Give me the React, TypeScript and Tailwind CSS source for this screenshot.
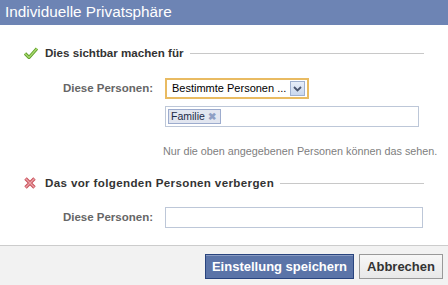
import React from 'react'

const font = { fontFamily: '"Liberation Sans", Arial, sans-serif' }

function CheckIcon() {
  return (
    <svg width="14" height="12" viewBox="0 0 14 12" className="block">
      <path d="M1 6.5 L5 10.5 L13 1.5" fill="none" stroke="#5e9e2a" strokeWidth="3.2" strokeLinejoin="miter" />
      <path d="M1 6.5 L5 10.5 L13 1.5" fill="none" stroke="#a8d86e" strokeWidth="1.4" strokeLinejoin="miter" />
    </svg>
  )
}

function CrossIcon() {
  return (
    <svg width="12" height="12" viewBox="0 0 12 12" className="block">
      <path d="M1.5 1.5 L10.5 10.5 M10.5 1.5 L1.5 10.5" fill="none" stroke="#c9505a" strokeWidth="3.4" />
      <path d="M1.5 1.5 L10.5 10.5 M10.5 1.5 L1.5 10.5" fill="none" stroke="#eba3a8" strokeWidth="1.4" />
    </svg>
  )
}

function SectionHeading({ icon, title, wide }: { icon: React.ReactNode; title: string; wide?: boolean }) {
  return (
    <div className="flex h-4 items-center pl-[24px] pr-[24px]">
      <div className="flex w-[21px] shrink-0 items-center">{icon}</div>
      <span
        className={
          'shrink-0 whitespace-nowrap text-[11.6px] font-bold text-[#333] ' + (wide ? 'tracking-[0.35px]' : '')
        }
      >
        {title}
      </span>
      <div className="ml-[6px] h-px min-w-0 flex-1 bg-[#c8c8c8]" />
    </div>
  )
}

function Label({ children }: { children: React.ReactNode }) {
  return (
    <div className="w-[153px] shrink-0 whitespace-nowrap text-right text-[11.5px] font-bold text-[#666]">{children}</div>
  )
}

export default function App() {
  return (
    <div className="flex h-[285px] w-[448px] flex-col overflow-hidden bg-white" style={font}>
      <div className="flex h-[25px] shrink-0 items-center bg-[#6d84b4] pl-[5px]">
        <span className="text-[15.3px] text-white">Individuelle Privatsphäre</span>
      </div>

      <div className="mt-[20px]">
        <SectionHeading icon={<CheckIcon />} title="Dies sichtbar machen für" />
      </div>

      <div className="mt-[17px] flex items-center gap-[12px]">
        <Label>Diese Personen:</Label>
        <div className="flex h-[21px] w-[144px] items-center justify-between border-2 border-[#e9bb62] bg-white pl-[5px] pr-[2px]">
          <span className="whitespace-nowrap text-[11px] text-black">Bestimmte Personen ...</span>
          <div className="flex h-[15px] w-[15px] items-center justify-center border border-[#9fb0d0] bg-gradient-to-b from-[#e8eef9] to-[#c9d7ee]">
            <svg width="9" height="6" viewBox="0 0 9 6">
              <path d="M1 1 L4.5 4.5 L8 1" fill="none" stroke="#4a5670" strokeWidth="1.8" />
            </svg>
          </div>
        </div>
      </div>

      <div className="ml-[165px] mt-[7px] flex h-[21px] w-[254px] items-center border border-[#bdc7d8] pl-[2px]">
        <div className="flex h-[15px] items-center gap-[3px] border border-[#9dacce] bg-[#e2e6f0] pl-[2px] pr-[4px]">
          <span className="text-[10.5px] leading-none text-[#1c2a47]">Familie</span>
          <span className="text-[10px] font-bold leading-none text-[#8f9fc4]">✖</span>
        </div>
      </div>

      <div className="ml-[163px] mt-[17px] whitespace-nowrap text-[10.8px] leading-[14px] text-[#808080]">
        Nur die oben angegebenen Personen können das sehen.
      </div>

      <div className="mt-[17px]">
        <SectionHeading icon={<CrossIcon />} title="Das vor folgenden Personen verbergen" wide />
      </div>

      <div className="mt-[16px] flex items-center gap-[12px]">
        <Label>Diese Personen:</Label>
        <div className="h-[21px] w-[258px] border border-[#bdc7d8] bg-white" />
      </div>

      <div className="mt-[17px] flex flex-1 items-start justify-end gap-[5px] border-t border-[#ccc] bg-[#f2f2f2] pr-[5px] pt-[8px]">
        <button className="h-[25px] w-[149px] border border-[#29447e] bg-[#5b74a8] text-[13px] font-bold text-white shadow-[inset_0_1px_0_#8a9cc2]">
          Einstellung speichern
        </button>
        <button className="h-[25px] w-[84px] border border-[#999] bg-gradient-to-b from-[#f7f7f7] to-[#e8e8e8] text-[13px] font-bold text-[#333]">
          Abbrechen
        </button>
      </div>
    </div>
  )
}
